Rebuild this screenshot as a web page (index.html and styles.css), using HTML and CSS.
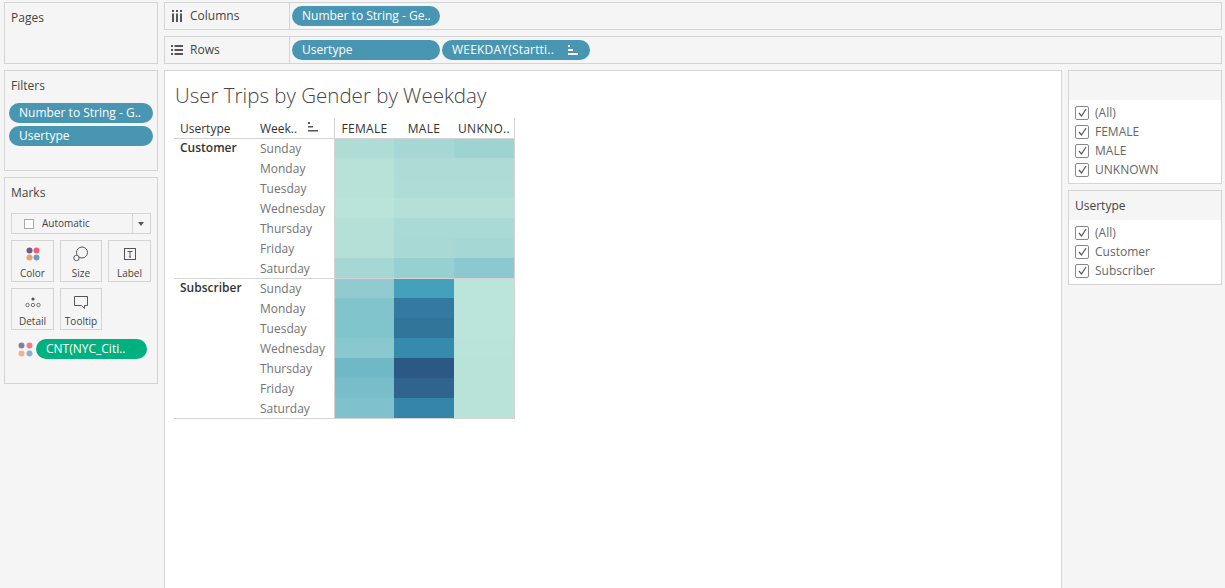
FILE: index.html
```html
<!DOCTYPE html>
<html lang="en">
<head>
  <meta charset="UTF-8" />
  <title>User Trips by Gender by Weekday</title>
  <link rel="stylesheet" href="styles.css">
</head>
<body>
  <div class="page">
    <aside class="left">
      <section class="card pages"><h3>Pages</h3></section>
      <section class="card filters">
        <h3>Filters</h3>
        <div class="pill">Number to String - G..</div>
        <div class="pill">Usertype</div>
      </section>
      <section class="card marks">
        <h3>Marks</h3>
        <div class="mark-select">
          <span class="square"></span>
          <span class="mark-name">Automatic</span>
          <span class="caret"></span>
        </div>
        <div class="mark-grid">
          <div class="mark-btn">
            <svg width="16" height="16" viewBox="0 0 16 16"><circle cx="4.500" cy="4.500" r="3" fill="#6d5a8e"/><circle cx="11.500" cy="4.500" r="3" fill="#e8636f"/><circle cx="4.500" cy="11.500" r="3" fill="#f0a06c"/><circle cx="11.500" cy="11.500" r="3" fill="#6f9bc8"/></svg>
            <span>Color</span>
          </div>
          <div class="mark-btn">
            <svg width="16" height="16" viewBox="0 0 16 16" fill="none" stroke="#555"><circle cx="9" cy="6.500" r="5.500"/><circle cx="3.500" cy="12" r="2.700" fill="#fff"/></svg>
            <span>Size</span>
          </div>
          <div class="mark-btn">
            <svg width="16" height="16" viewBox="0 0 16 16" fill="none" stroke="#555"><rect x="2.500" y="2.500" width="11" height="11"/><path d="M5.500 5.500h5M8 5.500v5.500M7 11h2"/></svg>
            <span>Label</span>
          </div>
          <div class="mark-btn">
            <svg width="16" height="16" viewBox="0 0 16 16" fill="none" stroke="#555" stroke-width=".8"><circle cx="8" cy="5" r="1.600" fill="#555" stroke="none"/><circle cx="2.500" cy="11" r="1.700"/><circle cx="8" cy="11" r="1.700"/><circle cx="13.500" cy="11" r="1.700"/></svg>
            <span>Detail</span>
          </div>
          <div class="mark-btn">
            <svg width="16" height="16" viewBox="0 0 16 16" fill="none" stroke="#555"><path d="M1.500 2.500h13v9h-3v3l-3-3h-7z"/></svg>
            <span>Tooltip</span>
          </div>
        </div>
        <div class="mark-field">
          <svg width="15" height="15" viewBox="0 0 15 15"><circle cx="3.500" cy="3.500" r="3" fill="#8a7ba3"/><circle cx="11.500" cy="3.500" r="3" fill="#ee7f88"/><circle cx="3.500" cy="11.500" r="3" fill="#f3b38a"/><circle cx="11.500" cy="11.500" r="3" fill="#8fb0d4"/></svg>
          <div class="pill green">CNT(NYC_Citi..</div>
        </div>
      </section>
    </aside>

    <div class="right">
      <div class="shelf">
        <div class="shelf-label">
          <svg width="12" height="12" viewBox="0 0 12 12" fill="#555"><path d="M1 0h2v2H1zM5 0h2v2H5zM9 0h2v2H9zM1 3.500h2V12H1zM5 3.500h2V12H5zM9 3.500h2V12H9z"/></svg>
          <span>Columns</span>
        </div>
        <div class="shelf-pills"><div class="pill shelf-pill">Number to String - Ge..</div></div>
      </div>
      <div class="shelf">
        <div class="shelf-label">
          <svg width="12" height="12" viewBox="0 0 12 12" fill="#555"><path d="M0 1h2v2H0zM3.500 1H12v2H3.500zM0 5h2v2H0zM3.500 5H12v2H3.500zM0 9h2v2H0zM3.500 9H12v2H3.500z"/></svg>
          <span>Rows</span>
        </div>
        <div class="shelf-pills">
          <div class="pill shelf-pill">Usertype</div>
          <div class="pill sorted">WEEKDAY(Startti..
            <svg class="sort" width="10" height="10" viewBox="0 0 10 10" fill="#fff"><path d="M0 0h2v2H0zM0 4h5v2H0zM0 8h10v2H0z"/></svg>
          </div>
        </div>
      </div>

      <div class="lower">
        <main class="sheet">
          <h1>User Trips by Gender by Weekday</h1>
          <div class="crosstab">
            <div class="head-row">
              <div class="col-type">Usertype</div>
              <div class="col-day">Week..
                <svg class="sort" width="10" height="10" viewBox="0 0 10 10" fill="#555"><path d="M0 0h2v2H0zM0 4h5v1.500H0zM0 8h10v1.500H0z"/></svg>
              </div>
              <div class="head-cells">
                <span>FEMALE</span><span>MALE</span><span>UNKNO..</span>
              </div>
            </div>

            <div class="group">
              <div class="col-type group-name">Customer</div>
              <div class="days">
                <div>Sunday</div><div>Monday</div><div>Tuesday</div><div>Wednesday</div><div>Thursday</div><div>Friday</div><div>Saturday</div>
              </div>
              <div class="heat">
                <i style="background:#b0dcd6"></i><i style="background:#a5d8d4"></i><i style="background:#9dd4d2"></i>
                <i style="background:#b8e2d8"></i><i style="background:#aedbd6"></i><i style="background:#aedbd6"></i>
                <i style="background:#b8e2d8"></i><i style="background:#afdcd6"></i><i style="background:#afdcd6"></i>
                <i style="background:#bae3d9"></i><i style="background:#b5e0d8"></i><i style="background:#b5e0d8"></i>
                <i style="background:#b4e0d8"></i><i style="background:#a9dad5"></i><i style="background:#a9dad5"></i>
                <i style="background:#b4e0d8"></i><i style="background:#a8d9d5"></i><i style="background:#a5d8d4"></i>
                <i style="background:#a5d8d4"></i><i style="background:#98cfd0"></i><i style="background:#8bc8cf"></i>
              </div>
            </div>

            <div class="group">
              <div class="col-type group-name">Subscriber</div>
              <div class="days">
                <div>Sunday</div><div>Monday</div><div>Tuesday</div><div>Wednesday</div><div>Thursday</div><div>Friday</div><div>Saturday</div>
              </div>
              <div class="heat">
                <i style="background:#92cbcf"></i><i style="background:#45a1bb"></i><i style="background:#bbe5da"></i>
                <i style="background:#82c4cc"></i><i style="background:#34799f"></i><i style="background:#bbe5da"></i>
                <i style="background:#80c4cc"></i><i style="background:#32759b"></i><i style="background:#bbe5da"></i>
                <i style="background:#8ac8cf"></i><i style="background:#368aab"></i><i style="background:#bae4d9"></i>
                <i style="background:#6fb9c7"></i><i style="background:#2c5885"></i><i style="background:#b9e3d9"></i>
                <i style="background:#78bdc9"></i><i style="background:#2f648e"></i><i style="background:#b9e3d9"></i>
                <i style="background:#7fc1cc"></i><i style="background:#3585ab"></i><i style="background:#b9e3d9"></i>
              </div>
            </div>
          </div>
        </main>

        <aside class="legends">
          <section class="legend">
            <div class="legend-title"></div>
            <ul>
              <li><span class="check"><svg width="9" height="9" viewBox="0 0 9 9" fill="none" stroke="#555" stroke-width="1.200"><path d="M1 5l2.500 3L8 1"/></svg></span>(All)</li>
              <li><span class="check"><svg width="9" height="9" viewBox="0 0 9 9" fill="none" stroke="#555" stroke-width="1.200"><path d="M1 5l2.500 3L8 1"/></svg></span>FEMALE</li>
              <li><span class="check"><svg width="9" height="9" viewBox="0 0 9 9" fill="none" stroke="#555" stroke-width="1.200"><path d="M1 5l2.500 3L8 1"/></svg></span>MALE</li>
              <li><span class="check"><svg width="9" height="9" viewBox="0 0 9 9" fill="none" stroke="#555" stroke-width="1.200"><path d="M1 5l2.500 3L8 1"/></svg></span>UNKNOWN</li>
            </ul>
          </section>
          <section class="legend">
            <div class="legend-title">Usertype</div>
            <ul>
              <li><span class="check"><svg width="9" height="9" viewBox="0 0 9 9" fill="none" stroke="#555" stroke-width="1.200"><path d="M1 5l2.500 3L8 1"/></svg></span>(All)</li>
              <li><span class="check"><svg width="9" height="9" viewBox="0 0 9 9" fill="none" stroke="#555" stroke-width="1.200"><path d="M1 5l2.500 3L8 1"/></svg></span>Customer</li>
              <li><span class="check"><svg width="9" height="9" viewBox="0 0 9 9" fill="none" stroke="#555" stroke-width="1.200"><path d="M1 5l2.500 3L8 1"/></svg></span>Subscriber</li>
            </ul>
          </section>
        </aside>
      </div>
    </div>
  </div>
</body>
</html>
```

FILE: styles.css
```css
* {
  box-sizing: border-box;
}

html, body {
  height: 100%;
  overflow: hidden;
}

body {
  font-family: "Open Sans", Arial, sans-serif;
  font-size: 12px;
  background: #f5f5f5;
  margin: 0;
  color: #444;
}

h3 {
  margin: 0;
  font-size: 12px;
  font-weight: 400;
  line-height: 16px;
  color: #444;
}

.page {
  display: flex;
  gap: 6px;
  height: 588px;
  padding: 2px 3px 0 4px;
}

.left {
  width: 154px;
  flex: none;
  display: flex;
  flex-direction: column;
  gap: 6px;
}

.card {
  border: 1px solid #d4d4d4;
  padding: 7px 6px 0;
}

.pages {
  height: 62px;
}

.filters {
  height: 101px;
}

.marks {
  height: 207px;
}

.pill {
  height: 20px;
  line-height: 20px;
  border-radius: 10px;
  background: #4996b2;
  color: #fff;
  padding: 0 10px;
  white-space: nowrap;
  overflow: hidden;
}

.filters .pill {
  width: 144px;
  margin: 0 0 3px -2px;
}

.filters h3 {
  margin-bottom: 9px;
}

.mark-select {
  display: flex;
  align-items: center;
  height: 21px;
  margin-top: 12px;
  border: 1px solid #d4d4d4;
  font-size: 10px;
}

.square {
  width: 10px;
  height: 10px;
  margin: 0 8px 0 12px;
  border: 1px solid #aaa;
  background: #fff;
}

.mark-name {
  flex: 1;
  padding-bottom: 2px;
}

.caret {
  width: 18px;
  height: 100%;
  border-left: 1px solid #d4d4d4;
  position: relative;
}

.caret::after {
  content: "";
  position: absolute;
  left: 5px;
  top: 8px;
  border: 3px solid transparent;
  border-top: 4px solid #555;
}

.mark-grid {
  display: grid;
  grid-template-columns: 43px 42px 43px;
  gap: 6px;
  margin-top: 6px;
}

.mark-btn {
  height: 42px;
  border: 1px solid #d4d4d4;
  display: flex;
  flex-direction: column;
  align-items: center;
  padding-top: 5px;
  font-size: 10px;
  line-height: 14px;
}

.mark-btn span {
  margin-top: 4px;
}

.mark-field {
  display: flex;
  align-items: center;
  gap: 3px;
  margin: 9px 0 0 7px;
}

.pill.green {
  width: 111px;
  background: #00b180;
}

.right {
  flex: 1;
  min-width: 0;
  display: flex;
  flex-direction: column;
  gap: 6px;
}

.shelf {
  display: flex;
  height: 28px;
  flex: none;
  border: 1px solid #d4d4d4;
}

.shelf-label {
  width: 125px;
  flex: none;
  display: flex;
  align-items: center;
  gap: 7px;
  padding-left: 6px;
  border-right: 1px solid #d4d4d4;
}

.shelf-label span {
  padding-bottom: 2px;
}

.shelf-pills {
  display: flex;
  align-items: center;
  gap: 2px;
  padding-left: 2px;
}

.shelf-pill {
  width: 148px;
}

.sorted {
  width: 148px;
  position: relative;
  letter-spacing: .2px;
}

.sorted .sort {
  position: absolute;
  right: 12px;
  top: 5px;
}

.lower {
  flex: 1;
  display: flex;
  gap: 6px;
  min-height: 0;
}

.sheet {
  flex: 1;
  background: #fff;
  border: 1px solid #d4d4d4;
  border-bottom: none;
  padding: 0 9px;
}

.sheet h1 {
  margin: 11px 0 0 1px;
  font-size: 20.500px;
  line-height: 26px;
  font-weight: 300;
  color: #444;
}

.crosstab {
  width: 341px;
  margin-top: 10px;
}

.head-row {
  display: flex;
  height: 21px;
  align-items: center;
  border-bottom: 1px solid #d4d4d4;
  color: #333;
}

.col-type {
  width: 86px;
  padding-left: 6px;
  flex: none;
}

.col-day {
  width: 74px;
  flex: none;
  position: relative;
}

.col-day .sort {
  position: absolute;
  left: 48px;
  top: 2px;
}

.head-cells {
  flex: 1;
  height: 100%;
  display: grid;
  grid-template-columns: 59px 60px 60px;
  align-items: center;
  text-align: center;
  letter-spacing: .3px;
  border-left: 1px solid #d4d4d4;
  border-right: 1px solid #d4d4d4;
}

.group {
  display: flex;
  height: 140px;
  border-bottom: 1px solid #d4d4d4;
}

.group-name {
  font-weight: 600;
  line-height: 16px;
  margin-top: 1px;
  color: #333;
}

.days {
  width: 74px;
  flex: none;
  color: #737373;
}

.days div {
  height: 20px;
  line-height: 20px;
}

.heat {
  flex: 1;
  display: grid;
  grid-template-columns: 59px 60px 60px;
  grid-template-rows: 19px repeat(6, 20px);
  border-left: 1px solid #d4d4d4;
  border-right: 1px solid #d4d4d4;
}

.legends {
  width: 154px;
  flex: none;
  display: flex;
  flex-direction: column;
  gap: 6px;
}

.legend {
  border: 1px solid #d4d4d4;
  background: #fff;
  padding-bottom: 4px;
}

.legend-title {
  height: 29px;
  line-height: 29px;
  padding-left: 6px;
  background: #f5f5f5;
}

.legend ul {
  list-style: none;
  margin: 0;
  padding: 3px 0 0 6px;
}

.legend li {
  display: flex;
  align-items: center;
  height: 19px;
  gap: 6px;
  color: #666;
}

.check {
  width: 14px;
  height: 14px;
  border: 1px solid #888;
  border-radius: 2px;
  display: flex;
  align-items: center;
  justify-content: center;
}
```
